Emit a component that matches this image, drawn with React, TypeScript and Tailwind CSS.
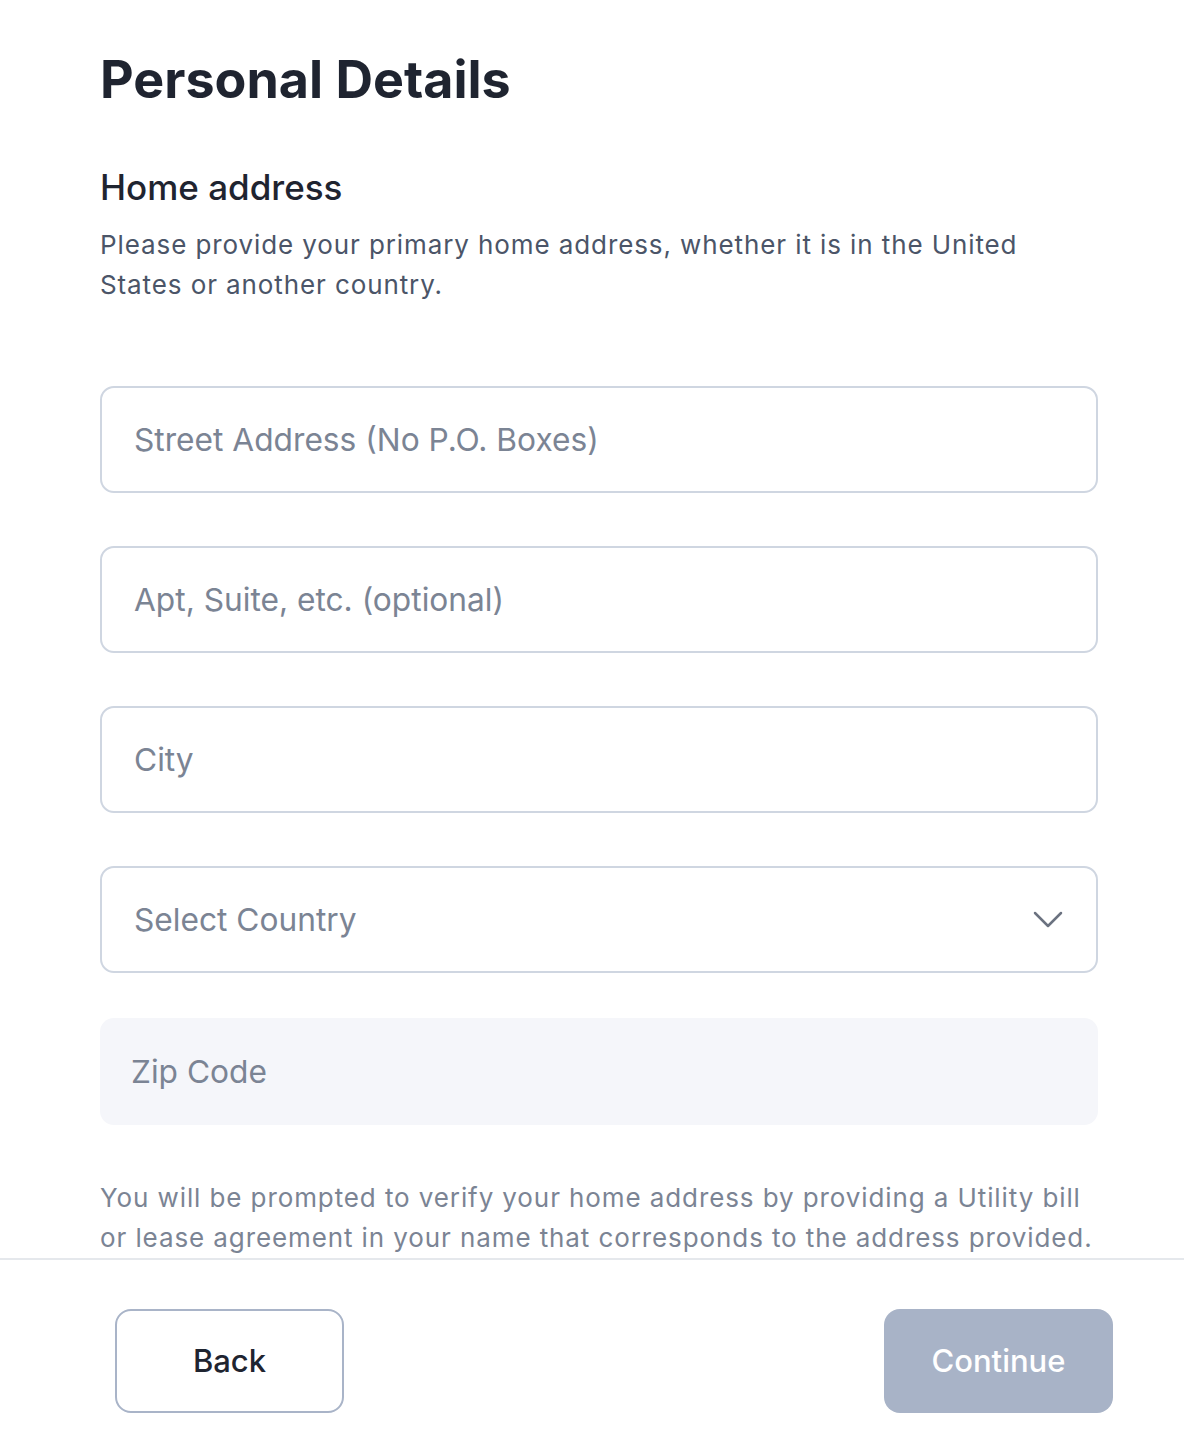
import React from "react";

const font = { fontFamily: "Inter, 'Noto Sans', sans-serif" };

function Field({ placeholder, select }: { placeholder: string; select?: boolean }) {
  return (
    <div className="flex h-[107px] items-center justify-between rounded-[14px] border-2 border-[#cfd6e1] bg-white pl-[32px] pr-[33px]">
      <span className="text-[31.7px] text-[#7b8494]">{placeholder}</span>
      {select && (
        <svg width="30" height="18" viewBox="0 0 30 18" fill="none">
          <path d="M2 2 L15 15 L28 2" stroke="#6b7280" strokeWidth="2.5" strokeLinecap="round" strokeLinejoin="round" />
        </svg>
      )}
    </div>
  );
}

export default function App() {
  return (
    <div className="min-h-[1444px] w-[1184px] overflow-hidden bg-white" style={font}>
      <div className="pl-[100px] pr-[86px] pt-[44px]">
        <h1 className="text-[52px] font-bold leading-[72px] text-[#1f2430]">Personal Details</h1>
        <h2 className="mt-[49px] text-[35px] font-medium leading-[44px] text-[#1f2430]">Home address</h2>
        <p className="mt-[16px] text-[26px] leading-[40px] tracking-[0.9px] text-[#4b5568]">
          Please provide your primary home address, whether it is in the United States or another country.
        </p>
        <div className="mt-[81px] flex flex-col gap-[53px]">
          <Field placeholder="Street Address (No P.O. Boxes)" />
          <Field placeholder="Apt, Suite, etc. (optional)" />
          <Field placeholder="City" />
          <Field placeholder="Select Country" select />
          <div className="-mt-[8px] flex h-[107px] items-center rounded-[14px] bg-[#f5f6fa] pl-[31px]">
            <span className="text-[31.7px] text-[#7b8494]">Zip Code</span>
          </div>
        </div>
        <p className="mt-[53px] whitespace-nowrap text-[26px] leading-[40px] tracking-[0.9px] text-[#7b8494]">
          You will be prompted to verify your home address by providing a Utility bill
          <br />
          or lease agreement in your name that corresponds to the address provided.
        </p>
      </div>
      <div className="border-t-2 border-[#e5e8ec]">
        <div className="flex items-center justify-between pl-[115px] pr-[71px] pt-[49px]">
          <button className="flex h-[104px] w-[229px] items-center justify-center rounded-[16px] border-2 border-[#a9b4c8] bg-white text-[31px] font-medium text-[#1f2430]">
            Back
          </button>
          <button className="flex h-[104px] w-[229px] items-center justify-center rounded-[16px] bg-[#a8b3c7] text-[31px] font-medium text-white">
            Continue
          </button>
        </div>
      </div>
    </div>
  );
}
